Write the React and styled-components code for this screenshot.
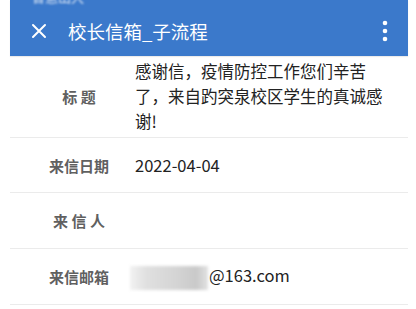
import React from 'react';
import styled, { createGlobalStyle } from 'styled-components';

const GlobalStyle = createGlobalStyle`
  html, body {
    margin: 0;
    padding: 0;
    background: #fff;
  }
  body {
    font-family: "Noto Sans CJK SC", "Noto Sans", sans-serif;
  }
`;

const Page = styled.div`
  width: 416px;
  height: 309px;
  overflow: hidden;
  background: #fff;
  padding: 0 8px 0 10px;
  box-sizing: border-box;
`;

const Header = styled.header`
  background: #3b79cb;
  color: #fff;
  box-shadow: 0 1px 1px rgba(0, 0, 0, 0.08);
`;

const StatusStrip = styled.div`
  height: 6px;
  overflow: hidden;
  padding-left: 22px;
  span {
    display: block;
    margin-top: -11px;
    font-size: 13px;
    line-height: 16px;
    filter: blur(0.8px);
    opacity: 0.85;
  }
`;

const Toolbar = styled.div`
  height: 50px;
  display: flex;
  align-items: center;
  padding: 0 20px 0 21px;
`;

const IconButton = styled.div`
  display: flex;
  align-items: center;
  justify-content: center;
  width: 16px;
  height: 16px;
`;

const Title = styled.h1`
  flex: 1;
  margin: 0 0 0 21px;
  font-size: 18.5px;
  font-weight: 400;
`;

const Row = styled.div`
  display: grid;
  grid-template-columns: 110px 1fr;
  align-items: center;
  min-height: ${p => p.$h || 55}px;
  padding: ${p => p.$pad || 0}px 10px ${p => p.$pad || 0}px 14px;
  border-bottom: 1px solid #ebebeb;
  box-sizing: border-box;
`;

const Label = styled.div`
  text-align: center;
  color: #606060;
  font-size: 15px;
  font-weight: 700;
  white-space: pre;
`;

const Value = styled.div`
  padding-left: 1px;
  color: #222;
  font-size: 16.5px;
  line-height: 25px;
`;

const Blurred = styled.span`
  display: inline-block;
  vertical-align: middle;
  width: 78px;
  height: 24px;
  margin: 0 1px 0 -5px;
  background: linear-gradient(90deg, #f2f2f2 0%, #e0e0e0 20%, #d4d4d4 60%, #c9c9c9 85%, #e2e2e2 100%);
  filter: blur(1.5px);
`;

const CloseIcon = () => (
  <svg width="16" height="16" viewBox="0 0 16 16">
    <path d="M2 2 L14 14 M14 2 L2 14" stroke="#fff" strokeWidth="2" strokeLinecap="round" />
  </svg>
);

const MoreIcon = () => (
  <svg width="6" height="22" viewBox="0 0 6 22">
    <circle cx="3" cy="3" r="2.3" fill="#fff" />
    <circle cx="3" cy="11" r="2.3" fill="#fff" />
    <circle cx="3" cy="19" r="2.3" fill="#fff" />
  </svg>
);

const App = () => (
  <Page>
    <GlobalStyle />
    <Header>
      <StatusStrip>
        <span>智慧山大</span>
      </StatusStrip>
      <Toolbar>
        <IconButton>
          <CloseIcon />
        </IconButton>
        <Title>校长信箱_子流程</Title>
        <MoreIcon />
      </Toolbar>
    </Header>
    <Row $h={82} $pad={3}>
      <Label>标 题</Label>
      <Value>感谢信，疫情防控工作您们辛苦了，来自趵突泉校区学生的真诚感谢!</Value>
    </Row>
    <Row>
      <Label>来信日期</Label>
      <Value>2022-04-04</Value>
    </Row>
    <Row $h={56}>
      <Label>来 信 人</Label>
      <Value />
    </Row>
    <Row $h={56}>
      <Label>来信邮箱</Label>
      <Value>
        <Blurred />@163.com
      </Value>
    </Row>
  </Page>
);

export default App;
